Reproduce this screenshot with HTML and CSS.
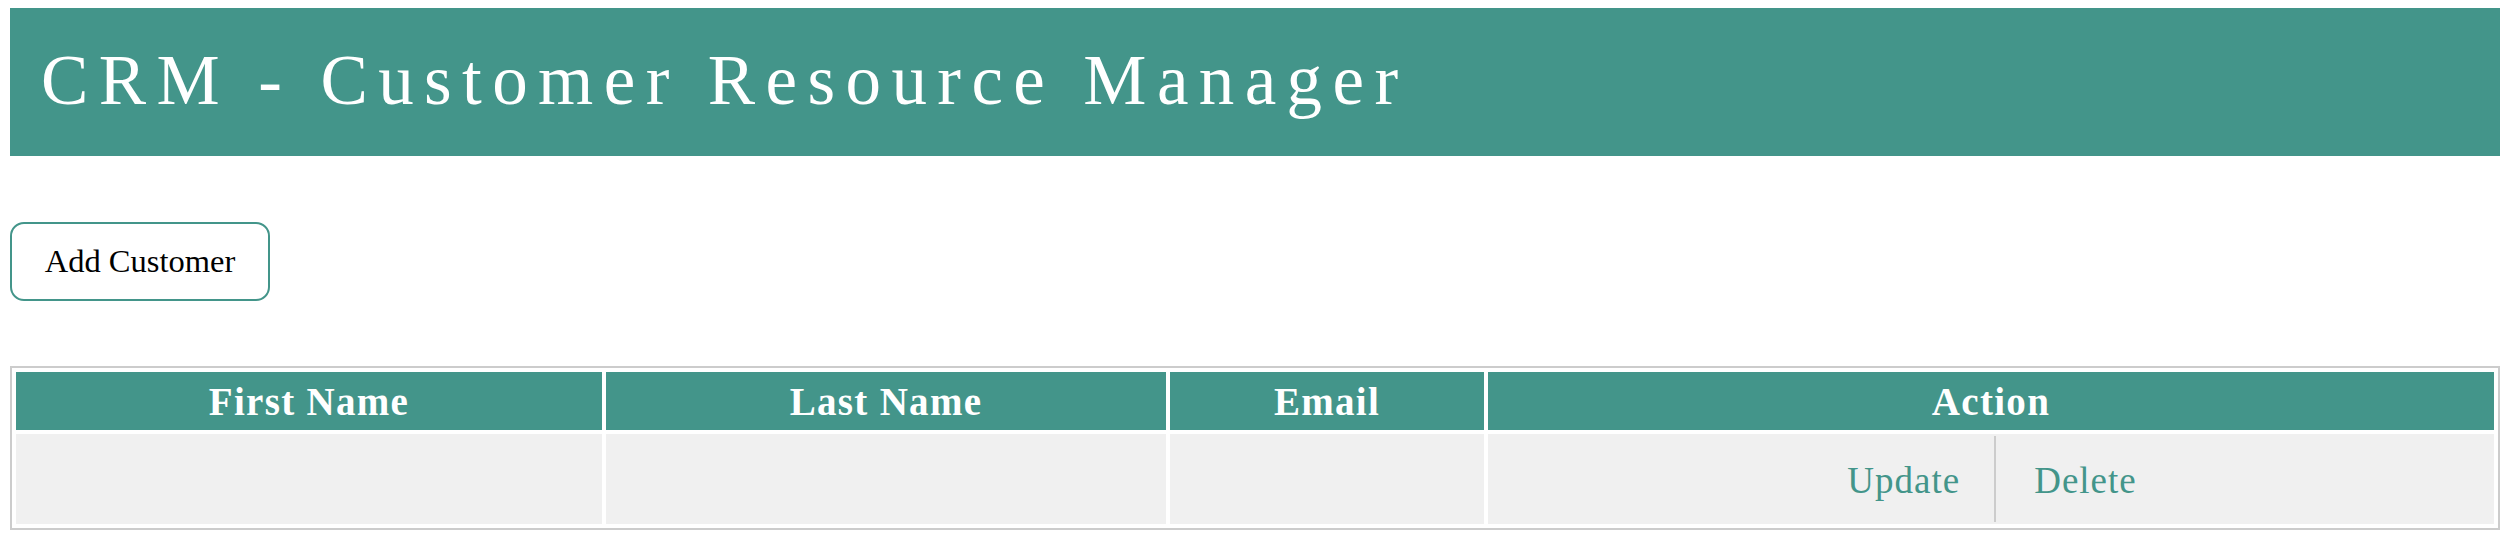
FILE: index.html
```html
<!DOCTYPE html>
<html lang="en">
<head>
<meta charset="utf-8">
<title>CRM - Customer Resource Manager</title>
<link rel="stylesheet" href="styles.css">
</head>
<body>
  <header class="banner">
    <h1 class="banner-title">CRM - Customer Resource Manager</h1>
  </header>
  <main class="content">
    <button class="add-btn" type="button">Add Customer</button>
    <table class="customers">
      <colgroup>
        <col class="col-first">
        <col class="col-last">
        <col class="col-email">
        <col class="col-action">
      </colgroup>
      <thead>
        <tr>
          <th>First Name</th>
          <th>Last Name</th>
          <th>Email</th>
          <th>Action</th>
        </tr>
      </thead>
      <tbody>
        <tr>
          <td></td>
          <td></td>
          <td></td>
          <td class="actions-cell">
            <div class="actions">
              <a class="action-link" href="#">Update</a>
              <a class="action-link action-link--sep" href="#">Delete</a>
            </div>
          </td>
        </tr>
      </tbody>
    </table>
  </main>
</body>
</html>
```

FILE: styles.css
```css
html, body {
  background: #ffffff;
}

body {
  margin: 8px 10px;
  font-family: "Liberation Serif", "Times New Roman", serif;
  color: #000000;
}

.banner {
  background: #43958a;
  height: 148px;
  box-sizing: border-box;
  padding: 33px 30px 0 31px;
}

.banner-title {
  margin: 0;
  font-family: "Liberation Serif", "Times New Roman", serif;
  font-weight: normal;
  font-size: 71px;
  line-height: 79px;
  letter-spacing: 10.4px;
  color: #ffffff;
}

.content {
  display: flex;
  flex-direction: column;
  align-items: flex-start;
  padding-top: 66px;
}

.add-btn {
  font-family: "Liberation Serif", "Times New Roman", serif;
  font-size: 32.5px;
  line-height: 37px;
  color: #000000;
  background: #ffffff;
  border: 2px solid #43958a;
  border-radius: 14px;
  width: 260px;
  height: 79px;
  padding: 0;
  cursor: pointer;
}

.customers {
  margin-top: 65px;
  width: 100%;
  table-layout: fixed;
  border: 2px solid #cccccc;
  border-spacing: 4px;
  border-collapse: separate;
}

.col-first { width: 586px; }
.col-last { width: 560px; }
.col-email { width: 314px; }
.col-action { width: 1006px; }

.customers th {
  background: #43958a;
  color: #ffffff;
  font-weight: bold;
  font-size: 39px;
  line-height: 45px;
  letter-spacing: 1.3px;
  height: 58px;
  padding: 0;
  text-align: center;
}

.customers td {
  background: #f0f0f0;
  height: 90px;
  padding: 0;
}

.actions-cell {
  padding: 2px 0;
}

.actions {
  display: flex;
  justify-content: center;
  align-items: stretch;
  height: 86px;
  padding-left: 2px;
}

.action-link {
  display: flex;
  align-items: center;
  padding: 3px 34px 0 34px;
  font-size: 37px;
  letter-spacing: 1px;
  color: #43958a;
  text-decoration: none;
}

.action-link--sep {
  border-left: 2px solid #cccccc;
  padding-left: 38px;
}
```
